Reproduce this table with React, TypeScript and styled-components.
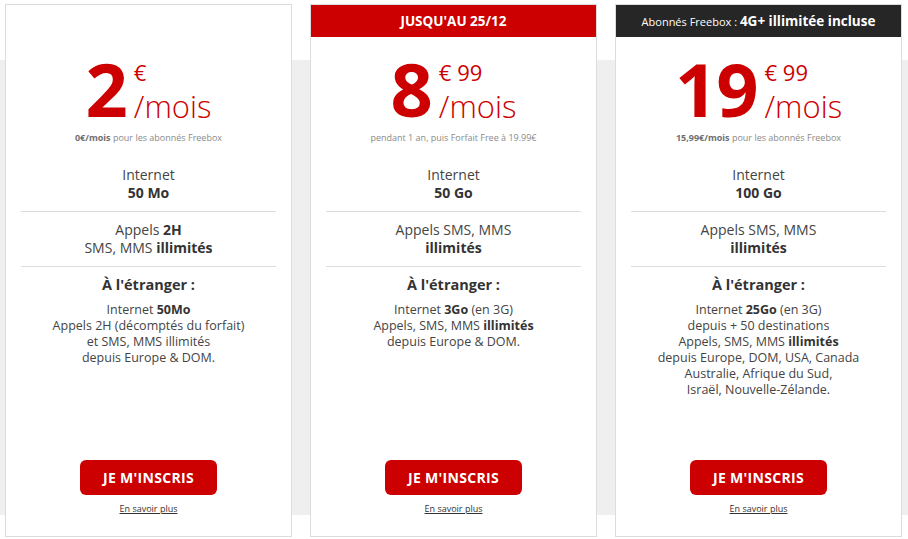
import type { ReactNode } from "react";
import styled, { createGlobalStyle } from "styled-components";

const GlobalStyle = createGlobalStyle`
	body {
		margin: 0;
		font-family: "Open Sans", "DejaVu Sans", sans-serif;
		-webkit-font-smoothing: antialiased;
	}
`;

type Tone = "none" | "red" | "dark";

type Offer = {
	banner?: ReactNode;
	tone: Tone;
	euros: string;
	cents?: string;
	note: ReactNode;
	data: string;
	calls: ReactNode;
	abroad: ReactNode[];
};

const Page = styled.div`
	box-sizing: border-box;
	width: 908px;
	height: 539px;
	padding: 4px 0 0 5px;
	background: linear-gradient(
		to bottom,
		#fff 0,
		#fff 60px,
		#efefef 60px,
		#efefef 515px,
		#fff 515px
	);
`;

const Grid = styled.div`
	display: grid;
	grid-template-columns: repeat(3, 1fr);
	column-gap: 18px;
	width: 897px;
`;

const Card = styled.div`
	box-sizing: border-box;
	height: 533px;
	display: flex;
	flex-direction: column;
	background: #fff;
	border: 1px solid #dcdcdc;
`;

const Banner = styled.div<{ $tone: Tone }>`
	height: 32px;
	flex-shrink: 0;
	display: flex;
	align-items: center;
	justify-content: center;
	color: #fff;
	font-size: 13.5px;
	background: ${(p) =>
		p.$tone === "red" ? "#cc0000" : p.$tone === "dark" ? "#262626" : "transparent"};
`;

const BannerSmall = styled.span`
	font-size: 11px;
	white-space: pre;
`;

const PriceRow = styled.div`
	margin-top: 15px;
	display: flex;
	justify-content: center;
	align-items: flex-start;
	color: #cc0000;
`;

const BigNum = styled.div`
	font-size: 74px;
	line-height: 74px;
	font-weight: 700;
	letter-spacing: -1px;
`;

const PriceSide = styled.div`
	display: flex;
	flex-direction: column;
	margin-left: 7px;
	padding-top: 9px;
`;

const Cents = styled.div`
	font-size: 22px;
	line-height: 22px;
`;

const PerMonth = styled.div`
	font-size: 31px;
	line-height: 46px;
	font-weight: 300;
`;

const Note = styled.div`
	margin-top: 2px;
	text-align: center;
	font-size: 9px;
	line-height: 14px;
	color: #8a8a8a;

	b {
		color: #6f6f6f;
	}
`;

const Features = styled.div`
	margin-top: 21px;
	padding: 0 15px;
`;

const Group = styled.div`
	padding: 9px 0;
	text-align: center;
	font-size: 14px;
	line-height: 18px;
	color: #444;
	border-bottom: 1px solid #dcdcdc;

	&:first-child {
		padding-top: 0;
	}

	&:last-child {
		border-bottom: none;
	}

	b {
		color: #333;
	}
`;

const Heading = styled.div`
	font-size: 14.5px;
	font-weight: 700;
	color: #333;
`;

const AbroadList = styled.div`
	margin-top: 8px;
	font-size: 12.5px;
	line-height: 16px;
`;

const Actions = styled.div`
	margin-top: auto;
	padding-bottom: 20px;
	display: flex;
	flex-direction: column;
	align-items: center;
`;

const SignUp = styled.button`
	width: 137px;
	height: 35px;
	border: none;
	border-radius: 6px;
	background: #cc0000;
	color: #fff;
	font-family: inherit;
	font-size: 14px;
	font-weight: 700;
	letter-spacing: 0.3px;
	cursor: pointer;
`;

const MoreLink = styled.a`
	margin-top: 7px;
	font-size: 9px;
	line-height: 14px;
	color: #333;
	text-decoration: underline;
`;

const offers: Offer[] = [
	{
		tone: "none",
		euros: "2",
		note: (
			<>
				<b>0€/mois</b> pour les abonnés Freebox
			</>
		),
		data: "50 Mo",
		calls: (
			<>
				Appels <b>2H</b>
				<br />
				SMS, MMS <b>illimités</b>
			</>
		),
		abroad: [
			<>
				Internet <b>50Mo</b>
			</>,
			"Appels 2H (décomptés du forfait)",
			"et SMS, MMS illimités",
			"depuis Europe & DOM.",
		],
	},
	{
		tone: "red",
		banner: <b>JUSQU'AU 25/12</b>,
		euros: "8",
		cents: "99",
		note: "pendant 1 an, puis Forfait Free à 19.99€",
		data: "50 Go",
		calls: (
			<>
				Appels SMS, MMS
				<br />
				<b>illimités</b>
			</>
		),
		abroad: [
			<>
				Internet <b>3Go</b> (en 3G)
			</>,
			<>
				Appels, SMS, MMS <b>illimités</b>
			</>,
			"depuis Europe & DOM.",
		],
	},
	{
		tone: "dark",
		banner: (
			<>
				<BannerSmall>Abonnés Freebox : </BannerSmall>
				<b>4G+ illimitée incluse</b>
			</>
		),
		euros: "19",
		cents: "99",
		note: (
			<>
				<b>15,99€/mois</b> pour les abonnés Freebox
			</>
		),
		data: "100 Go",
		calls: (
			<>
				Appels SMS, MMS
				<br />
				<b>illimités</b>
			</>
		),
		abroad: [
			<>
				Internet <b>25Go</b> (en 3G)
			</>,
			"depuis + 50 destinations",
			<>
				Appels, SMS, MMS <b>illimités</b>
			</>,
			"depuis Europe, DOM, USA, Canada",
			"Australie, Afrique du Sud,",
			"Israël, Nouvelle-Zélande.",
		],
	},
];

const App = () => {
	return (
		<>
			<GlobalStyle />
			<Page>
				<Grid>
					{offers.map((offer, i) => (
						<Card key={i}>
							<Banner $tone={offer.tone}>{offer.banner}</Banner>
							<PriceRow>
								<BigNum>{offer.euros}</BigNum>
								<PriceSide>
									<Cents>€{offer.cents ? ` ${offer.cents}` : ""}</Cents>
									<PerMonth>/mois</PerMonth>
								</PriceSide>
							</PriceRow>
							<Note>{offer.note}</Note>
							<Features>
								<Group>
									Internet
									<br />
									<b>{offer.data}</b>
								</Group>
								<Group>{offer.calls}</Group>
								<Group>
									<Heading>À l'étranger :</Heading>
									<AbroadList>
										{offer.abroad.map((line, j) => (
											<div key={j}>{line}</div>
										))}
									</AbroadList>
								</Group>
							</Features>
							<Actions>
								<SignUp>JE M'INSCRIS</SignUp>
								<MoreLink href="#">En savoir plus</MoreLink>
							</Actions>
						</Card>
					))}
				</Grid>
			</Page>
		</>
	);
};

export default App;
